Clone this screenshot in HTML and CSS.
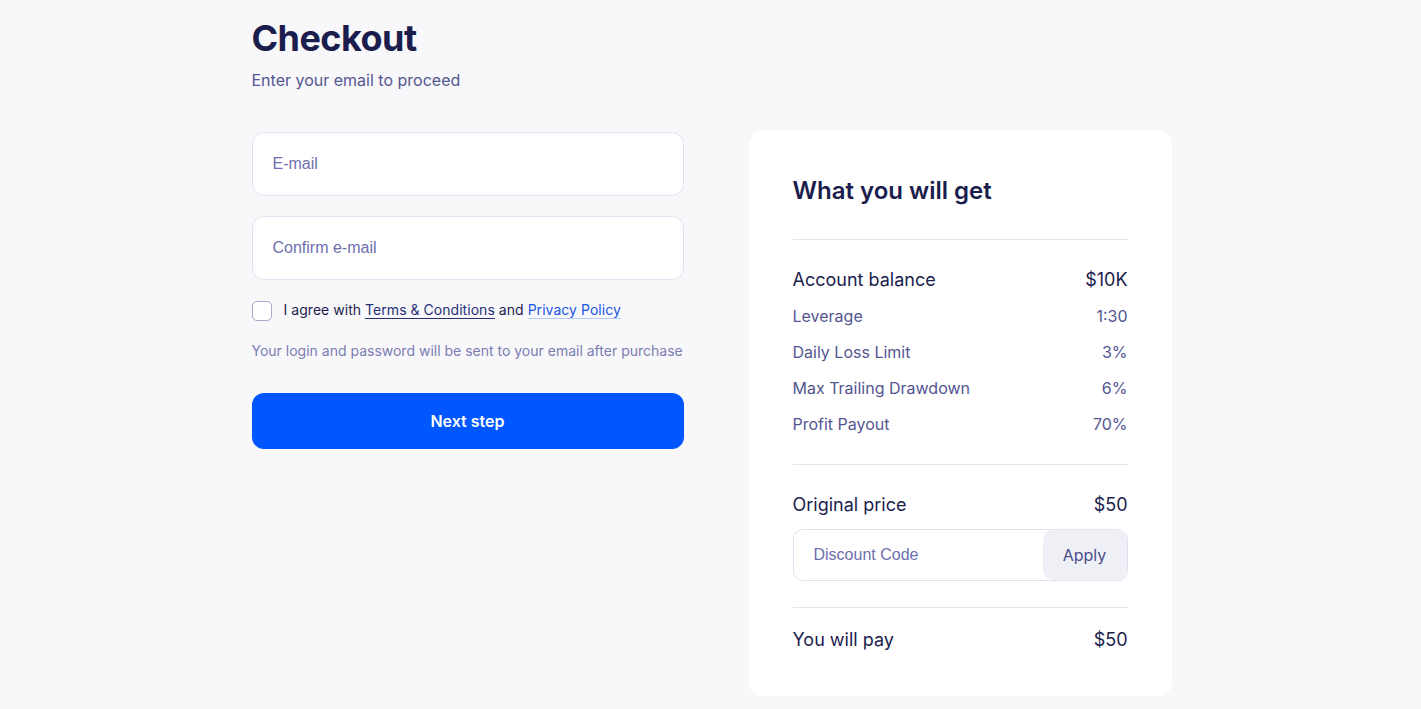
FILE: index.html
```html
<!DOCTYPE html>
<html lang="en">
<head>
<meta charset="utf-8">
<title>Checkout</title>
<link rel="stylesheet" href="styles.css">
</head>
<body>
<main class="page">
  <header class="head">
    <h1 class="title">Checkout</h1>
    <p class="subtitle">Enter your email to proceed</p>
  </header>
  <div class="columns">
    <form class="form">
      <input class="field" type="email" placeholder="E-mail">
      <input class="field field-confirm" type="email" placeholder="Confirm e-mail">
      <label class="agree">
        <span class="box"></span>
        <span class="agree-text">I agree with <a class="link-terms" href="#">Terms &amp; Conditions</a> and <a class="link-privacy" href="#">Privacy Policy</a></span>
      </label>
      <p class="note">Your login and password will be sent to your email after purchase</p>
      <button class="next" type="button">Next step</button>
    </form>
    <section class="card">
      <h2 class="card-title">What you will get</h2>
      <hr class="divider divider-top">
      <div class="row row-main row-first"><span>Account balance</span><span>$10K</span></div>
      <div class="row row-sub row-sub-first"><span>Leverage</span><span>1:30</span></div>
      <div class="row row-sub"><span>Daily Loss Limit</span><span>3%</span></div>
      <div class="row row-sub"><span>Max Trailing Drawdown</span><span>6%</span></div>
      <div class="row row-sub"><span>Profit Payout</span><span>70%</span></div>
      <hr class="divider divider-mid">
      <div class="row row-main row-price"><span>Original price</span><span>$50</span></div>
      <div class="discount">
        <input class="discount-input" type="text" placeholder="Discount Code">
        <button class="apply" type="button">Apply</button>
      </div>
      <hr class="divider divider-bot">
      <div class="row row-main row-pay"><span>You will pay</span><span>$50</span></div>
    </section>
  </div>
</main>
</body>
</html>
```

FILE: styles.css
```css
* { box-sizing: border-box; }
html, body { margin: 0; padding: 0; }
body {
  background: #f8f8fb;
  font-family: Inter, "Noto Sans", sans-serif;
  color: #1b1d4d;
}
.page {
  width: 920px;
  margin: 0 auto;
  padding: 16px 0 0 0;
  position: relative;
  left: 1px;
}
.title {
  margin: 0;
  font-size: 36px;
  line-height: 44px;
  font-weight: 700;
  color: #1b1d4d;
  letter-spacing: -0.55px;
}
.subtitle {
  margin: 10px 0 0 0;
  font-size: 16px;
  line-height: 20px;
  color: #53568f;
}
.columns {
  display: grid;
  grid-template-columns: 432px 423px;
  column-gap: 65px;
  margin-top: 41px;
  align-items: start;
}
.form {
  display: flex;
  flex-direction: column;
  padding-top: 1px;
}
.field {
  height: 64px;
  border: 1px solid #e3e1f1;
  border-radius: 12px;
  background: #fff;
  padding: 0 20px;
  font-family: "Liberation Sans", Arial, sans-serif;
  font-size: 16px;
  color: #1b1d4d;
  outline: none;
}
.field::placeholder { color: #6d6fae; }
.field-confirm { margin-top: 20px; }
.agree {
  display: flex;
  align-items: center;
  margin-top: 20px;
  height: 22px;
}
.box {
  width: 20px;
  height: 20px;
  border: 1px solid #a6a8d0;
  border-radius: 5px;
  background: #fff;
  flex: none;
}
.agree-text {
  margin-left: 12px;
  font-size: 14px;
  line-height: 20px;
  color: #1b1d4d;
  position: relative;
  top: -1px;
  letter-spacing: 0.04px;
}
.link-terms {
  color: #283079;
  text-decoration: none;
  border-bottom: 1px solid #283079;
}
.link-privacy {
  color: #1a55e3;
  text-decoration: none;
  border-bottom: 1px solid #b9c8fb;
}
.note {
  margin: 19px 0 0 0;
  font-size: 14px;
  line-height: 20px;
  color: #7b7db1;
}
.next {
  margin-top: 32px;
  height: 56px;
  border: none;
  border-radius: 12px;
  background: #0057ff;
  color: #fff;
  font-family: Inter, sans-serif;
  font-size: 16px;
  font-weight: 600;
}
.card {
  background: #fff;
  border-radius: 14px;
  padding: 44px 44px 43px 44px;
}
.card-title {
  margin: 0;
  font-size: 24px;
  line-height: 32px;
  font-weight: 600;
  color: #1b1d4d;
}
.divider {
  border: none;
  border-top: 1px solid #e5e4f1;
  margin: 0;
}
.divider-top { margin-top: 32px; }
.divider-mid { margin-top: 28px; }
.divider-bot { margin-top: 26px; }
.row {
  display: flex;
  justify-content: space-between;
}
.row-main {
  font-size: 18px;
  line-height: 26px;
  color: #1b1d4d;
  margin-top: 26px;
}
.row-first { margin-top: 27px; }
.row-price { margin-top: 27px; }
.row-sub {
  font-size: 16px;
  line-height: 24px;
  color: #53568f;
  margin-top: 12px;
}
.row-sub-first { margin-top: 11px; }
.row-pay { margin-top: 19px; }
.discount {
  margin-top: 11px;
  display: flex;
  height: 52px;
  border: 1px solid #e3e1f1;
  border-radius: 10px;
  overflow: hidden;
}
.discount-input {
  flex: 1;
  min-width: 0;
  border: none;
  outline: none;
  padding: 0 20px;
  font-family: "Liberation Sans", Arial, sans-serif;
  font-size: 16px;
  color: #1b1d4d;
  background: #fff;
}
.discount-input::placeholder { color: #6d6fae; }
.apply {
  width: 84px;
  border: none;
  border-radius: 10px;
  background: #efeff6;
  color: #4b4e8a;
  font-family: Inter, sans-serif;
  font-size: 16px;
  padding: 0;
}
```
